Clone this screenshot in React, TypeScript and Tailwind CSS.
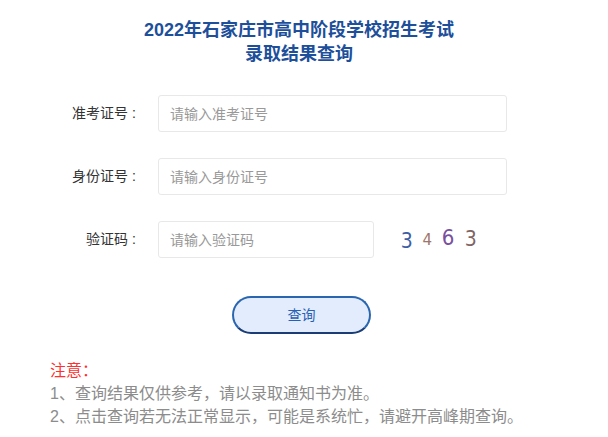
const cjk = "font-['Liberation_Sans','Noto_Sans_CJK_SC',sans-serif]";

function Row({ label, placeholder, short }: { label: string; placeholder: string; short?: boolean }) {
  return (
    <div className="flex items-center">
      <label className="w-[80px] ml-[60px] flex justify-end text-[14px] text-[#333]">
        {label}
        <span className="w-[12px] text-center">:</span>
      </label>
      <input
        placeholder={placeholder}
        className={`ml-[18px] h-[37px] ${short ? "w-[216px]" : "w-[349px]"} rounded-[3px] border border-[#e8e8e8] px-[11px] text-[14px] text-[#333] placeholder:text-[#999] outline-none`}
      />
    </div>
  );
}

function Captcha() {
  return (
    <div className="ml-[26px] flex items-center gap-[9px] font-['DejaVu_Sans',sans-serif]">
      <span className="text-[21px] text-[#3d5ea5] mt-[4px] scale-x-90">3</span>
      <span className="text-[15px] text-[#a0766a] mt-[2px]">4</span>
      <span className="text-[22px] text-[#7a4f9e] -mt-[4px] scale-x-90">6</span>
      <span className="text-[21px] text-[#7f6463] scale-x-90">3</span>
    </div>
  );
}

export default function App() {
  return (
    <div className={`w-[608px] h-[437px] bg-white ${cjk}`}>
      <h1 className="pt-[18px] pr-[10px] text-center text-[18px] font-bold leading-[24px] text-[#1d4f9b]">
        2022年石家庄市高中阶段学校招生考试
        <br />
        录取结果查询
      </h1>

      <div className="mt-[29px] flex flex-col gap-[26px]">
        <Row label="准考证号" placeholder="请输入准考证号" />
        <Row label="身份证号" placeholder="请输入身份证号" />
        <div className="flex items-center">
          <Row label="验证码" placeholder="请输入验证码" short />
          <Captcha />
        </div>
      </div>

      <button className="mt-[38px] ml-[232px] h-[38px] w-[139px] rounded-full border-2 border-[#2a66b0] border-b-[#1a3d78] bg-[#e2ecfd] text-[14px] text-[#2660b4]">
        查询
      </button>

      <div className="mt-[25px] pl-[50px] text-[16px] leading-[23px]">
        <p className="text-[#ff3030]">注意：</p>
        <p className="text-[#8c8c8c]">1、查询结果仅供参考，请以录取通知书为准。</p>
        <p className="text-[#8c8c8c]">2、点击查询若无法正常显示，可能是系统忙，请避开高峰期查询。</p>
      </div>
    </div>
  );
}
